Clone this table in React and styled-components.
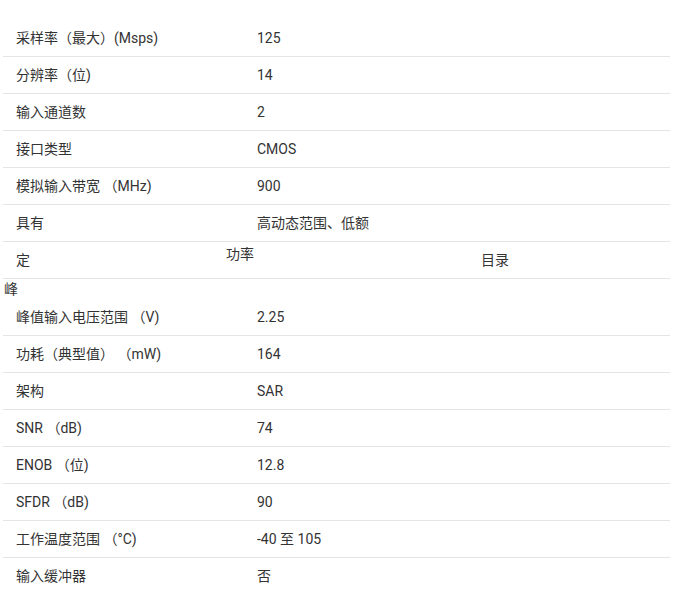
import React from "react";
import styled, { createGlobalStyle } from "styled-components";

const Global = createGlobalStyle`
  html, body { margin: 0; padding: 0; background: #fff; }
  body {
    font-family: Roboto, "Noto Sans CJK SC", sans-serif;
    font-size: 14px;
    color: #333;
  }
`;

const Table = styled.div`
  margin: 20px 8px 0 3px;
  width: 667px;
`;

const Row = styled.div`
  display: grid;
  grid-template-columns: ${(p) => p.$cols || "241px 1fr"};
  min-height: 36px;
  border-bottom: 1px solid #e4e4e4;
`;

const Cell = styled.div`
  padding-left: 13px;
  line-height: 20px;
  align-self: ${(p) => (p.$top ? "start" : "center")};
  padding-top: ${(p) => (p.$top ? "2px" : "0")};
  white-space: pre;
`;

const Loose = styled.div`
  line-height: 20px;
  padding-left: 1px;
`;

const rowsA = [
  ["采样率（最大）(Msps)", "125"],
  ["分辨率（位)", "14"],
  ["输入通道数", "2"],
  ["接口类型", "CMOS"],
  ["模拟输入带宽 （MHz)", "900"],
  ["具有", "高动态范围、低额"],
];

const rowsB = [
  ["峰值输入电压范围 （V)", "2.25"],
  ["功耗（典型值） （mW)", "164"],
  ["架构", "SAR"],
  ["SNR （dB)", "74"],
  ["ENOB （位)", "12.8"],
  ["SFDR （dB)", "90"],
  ["工作温度范围 （°C)", "-40 至 105"],
  ["输入缓冲器", "否"],
];

export default function App() {
  return (
    <>
      <Global />
      <Table>
        {rowsA.map(([k, v]) => (
          <Row key={k}>
            <Cell>{k}</Cell>
            <Cell>{v}</Cell>
          </Row>
        ))}
        <Row $cols="210px 255px 1fr">
          <Cell>定</Cell>
          <Cell $top>功率</Cell>
          <Cell>目录</Cell>
        </Row>
        <Loose>峰</Loose>
        {rowsB.map(([k, v]) => (
          <Row key={k}>
            <Cell>{k}</Cell>
            <Cell>{v}</Cell>
          </Row>
        ))}
      </Table>
    </>
  );
}
